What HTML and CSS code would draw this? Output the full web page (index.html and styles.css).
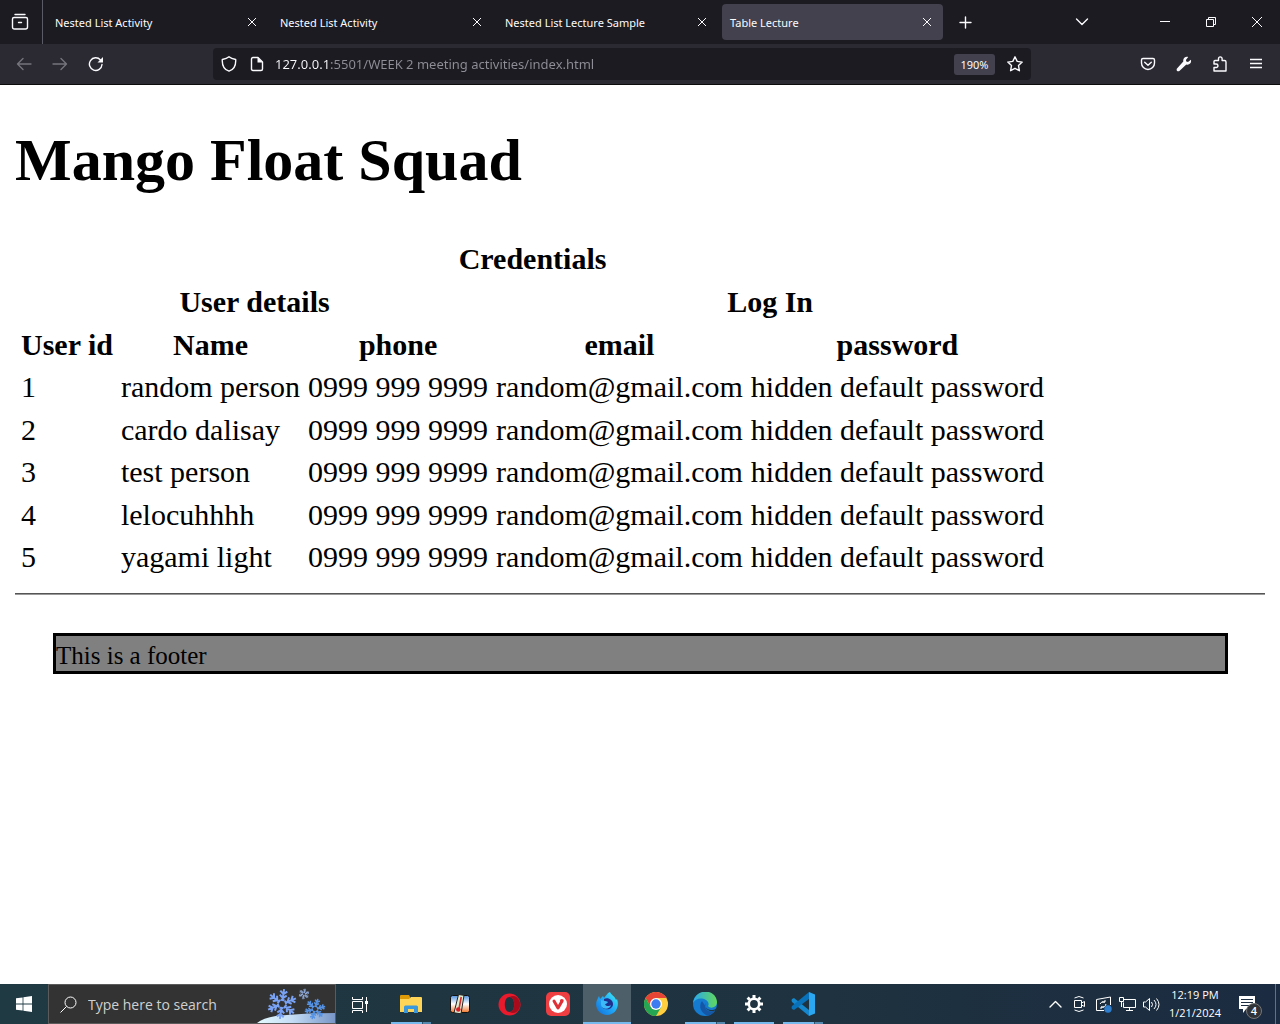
FILE: index.html
```html
<!DOCTYPE html>
<html lang="en">
<head>
<meta charset="utf-8">
<title>Table Lecture</title>
<link rel="stylesheet" href="styles.css">
</head>
<body>
<header class="browser">
  <div class="tabbar">
    <button class="view" aria-label="Firefox View"><svg width="18" height="18" viewBox="0 0 18 18" class="line"><path d="M4 1.500h10M3 4.500h12q1.500 0 1.500 1.500v8q0 2-2 2h-11q-2 0-2-2V6q0-1.500 1.500-1.500z"/><path d="M7.500 9.500h3"/></svg></button>
    <div class="tabs">
      <div class="tab"><button class="tab-name">Nested List Activity</button><button class="close" aria-label="Close tab"><svg width="10" height="10" viewBox="0 0 10 10" class="thin"><path d="M1 1l8 8M9 1l-8 8"/></svg></button></div>
      <div class="tab"><button class="tab-name">Nested List Activity</button><button class="close" aria-label="Close tab"><svg width="10" height="10" viewBox="0 0 10 10" class="thin"><path d="M1 1l8 8M9 1l-8 8"/></svg></button></div>
      <div class="tab"><button class="tab-name">Nested List Lecture Sample</button><button class="close" aria-label="Close tab"><svg width="10" height="10" viewBox="0 0 10 10" class="thin"><path d="M1 1l8 8M9 1l-8 8"/></svg></button></div>
      <div class="tab active"><button class="tab-name">Table Lecture</button><button class="close" aria-label="Close tab"><svg width="10" height="10" viewBox="0 0 10 10" class="thin"><path d="M1 1l8 8M9 1l-8 8"/></svg></button></div>
    </div>
    <button class="newtab" aria-label="New tab"><svg width="13" height="13" viewBox="0 0 13 13" class="line"><path d="M6.500 1v11M1 6.500h11"/></svg></button>
    <button class="listtabs" aria-label="List all tabs"><svg width="14" height="8" viewBox="0 0 14 8" class="line"><path d="M1.500 1L7 6.500 12.500 1"/></svg></button>
    <div class="window">
      <button aria-label="Minimize"><svg width="10" height="10" viewBox="0 0 10 10" class="thin"><path d="M0 4.500h10"/></svg></button>
      <button aria-label="Restore"><svg width="10" height="10" viewBox="0 0 10 10" class="thin"><path d="M.5 2.500h7v7h-7zM2.500 2.500v-2h7v7h-2"/></svg></button>
      <button aria-label="Close"><svg width="10" height="10" viewBox="0 0 10 10" class="thin"><path d="M0 0l10 10M10 0L0 10"/></svg></button>
    </div>
  </div>
  <div class="toolbar">
    <div class="nav">
      <button class="dim" aria-label="Back"><svg width="16" height="14" viewBox="0 0 16 14" class="line"><path d="M15 7H1.500M7 1.500L1.500 7 7 12.500"/></svg></button>
      <button class="dim" aria-label="Forward"><svg width="16" height="14" viewBox="0 0 16 14" class="line"><path d="M1 7h13.500M9 1.500L14.500 7 9 12.500"/></svg></button>
      <button aria-label="Reload"><svg width="16" height="16" viewBox="0 0 16 16" class="line"><path d="M14 8.500A6.300 6.300 0 1 1 12.500 4"/><path d="M15 1v5.500H9.500z" fill="currentColor" stroke="none"/></svg></button>
    </div>
    <div class="urlbar">
      <button aria-label="Tracking protection"><svg width="16" height="16" viewBox="0 0 16 16" class="line"><path d="M8 .8C6 2.500 4 3 1.300 3.500 1 9 2.500 13.500 8 15.200c5.500-1.700 7-6.200 6.700-11.700C12 3 10 2.500 8 .8z"/></svg></button>
      <button aria-label="Site information"><svg width="14" height="16" viewBox="0 0 14 16" class="line"><path d="M3 1.500h5L12.500 6v7q0 1.500-1.500 1.500H3q-1.500 0-1.500-1.500V3q0-1.500 1.500-1.500z"/><path d="M7.500 1v5.500H13z" fill="currentColor" stroke="none"/></svg></button>
      <input class="address" type="text" aria-label="Address" value="127.0.0.1:5501/WEEK 2 meeting activities/index.html">
      <button class="zoom">190%</button>
      <button class="star" aria-label="Bookmark this page"><svg width="18" height="18" viewBox="0 0 18 18" class="line"><path d="M9 1.800l2.200 4.600 5 .7-3.700 3.500.9 5.100L9 13.300l-4.400 2.400.9-5.100L1.800 7.100l5-.7z"/></svg></button>
    </div>
    <div class="extras">
      <button aria-label="Save to Pocket"><svg width="16" height="16" viewBox="0 0 16 16" class="line"><path d="M3 2.500h10q1.500 0 1.500 1.500v3a6.500 6.500 0 0 1-13 0V4q0-1.500 1.500-1.500z"/><path d="M4.700 6.200L8 9.300l3.300-3.100"/></svg></button>
      <button aria-label="Developer tools"><svg width="16" height="16" viewBox="0 0 16 16"><path fill="currentColor" d="M14.900 3.700l-2.900 2.300-1.700-.4-.4-1.700 2.300-2.900C9.400.2 6.700 2.300 7.300 5.400L1 12.600c-1.200 1.600.8 3.600 2.400 2.300l6.900-6.400c3.300.9 5.500-1.800 4.600-4.800z"/></svg></button>
      <button aria-label="Extensions"><svg width="16" height="18" viewBox="0 0 16 18" class="line"><path d="M2 9V6.500q0-1 1-1h3.500V3.700a1.800 1.800 0 0 1 3.600 0v1.800h2.400q1.500 0 1.500 1.500v9H2v-3.500h2.200a1.750 1.750 0 0 0 0-3.500z"/></svg></button>
      <button aria-label="Menu"><svg width="12" height="12" viewBox="0 0 12 12" class="line"><path d="M0 1.500h12M0 5.500h12M0 9.500h12"/></svg></button>
    </div>
  </div>
</header>

<main class="page">
  <h1>Mango Float Squad</h1>
  <table class="people">
    <thead>
      <tr><th colspan="5">Credentials</th></tr>
      <tr><th colspan="3">User details</th><th colspan="2">Log In</th></tr>
      <tr><th>User id</th><th>Name</th><th>phone</th><th>email</th><th>password</th></tr>
    </thead>
    <tbody>
      <tr><td>1</td><td>random person</td><td>0999 999 9999</td><td>random@gmail.com</td><td>hidden default password</td></tr>
      <tr><td>2</td><td>cardo dalisay</td><td>0999 999 9999</td><td>random@gmail.com</td><td>hidden default password</td></tr>
      <tr><td>3</td><td>test person</td><td>0999 999 9999</td><td>random@gmail.com</td><td>hidden default password</td></tr>
      <tr><td>4</td><td>lelocuhhhh</td><td>0999 999 9999</td><td>random@gmail.com</td><td>hidden default password</td></tr>
      <tr><td>5</td><td>yagami light</td><td>0999 999 9999</td><td>random@gmail.com</td><td>hidden default password</td></tr>
    </tbody>
  </table>
  <hr>
  <footer>This is a footer</footer>
</main>

<div class="taskbar">
  <button class="start" aria-label="Start"><svg width="16" height="16" viewBox="0 0 16 16" fill="#fff"><path d="M0 2.300l6.600-.9v6.200H0zM7.400 1.200L16 0v7.600H7.400zM0 8.400h6.600v6.200L0 13.700zM7.400 8.400H16V16l-8.600-1.200z"/></svg></button>
  <div class="search">
    <svg width="17" height="17" viewBox="0 0 17 17" class="thin"><circle cx="10.500" cy="6.500" r="5.500"/><path d="M6.500 10.500L.5 16.500"/></svg>
    <input type="text" aria-label="Search" placeholder="Type here to search">
    <svg class="snow" width="78" height="38" viewBox="0 0 78 38">
      <defs>
        <linearGradient id="hill" x2="1" y2="0"><stop offset="0" stop-color="#e4fbff"/><stop offset=".45" stop-color="#c4dcf5"/><stop offset="1" stop-color="#7896c8"/></linearGradient>
        <g id="arm"><path d="M0-3v-12M0-6l-3.500-3M0-6l3.500-3M0-10l-3.500-3M0-10l3.500-3M-2-4L2-4"/></g>
        <g id="flake" fill="none"><use href="#arm"/><use href="#arm" transform="rotate(60)"/><use href="#arm" transform="rotate(120)"/><use href="#arm" transform="rotate(180)"/><use href="#arm" transform="rotate(240)"/><use href="#arm" transform="rotate(300)"/></g>
      </defs>
      <path fill="url(#hill)" d="M0 38Q8 31 30 30 50 28 78 28v10z"/>
      <use href="#flake" transform="translate(25 19) rotate(8)" stroke="#79a2f4" stroke-width="2"/>
      <use href="#flake" transform="translate(47 9) rotate(10) scale(.36)" stroke="#8ea9d8" stroke-width="2.400"/>
      <use href="#flake" transform="translate(58 24) rotate(16) scale(.7)" stroke="#5592e4" stroke-width="2.200"/>
    </svg>
  </div>
  <button class="taskview" aria-label="Task View"><svg width="17" height="17" viewBox="0 0 17 17" class="thin"><path d="M.5 1v2.500h10V1M.5 5.500h10v7H.5zM.5 17v-2.500h10V17M14.500 1v15"/><path d="M13 5h3v3h-3z" fill="#fff" stroke="none"/></svg></button>
  <div class="apps">
    <button class="open more" aria-label="File Explorer"><svg width="22" height="18" viewBox="0 0 22 18"><path fill="#df9a08" d="M0 1q0-1 1-1h8l1 2v4H0z"/><path fill="#ffd457" d="M0 4h9l2-2h10q1 0 1 1v14H0z"/><path fill="#3b98dd" d="M4 18v-6q0-1.500 1.500-1.500h11q1.500 0 1.500 1.500v6h-4v-4H8v4z"/></svg></button>
    <button aria-label="Temperature monitor"><svg width="22" height="22" viewBox="0 0 22 22"><defs><linearGradient id="heat" y2="1" x2="0"><stop offset="0" stop-color="#5493df"/><stop offset=".5" stop-color="#fff"/><stop offset="1" stop-color="#ef762c"/></linearGradient></defs><rect x="1.500" y="2.500" width="19" height="17" rx="2" fill="url(#heat)" stroke="#111"/><path d="M9.500 1.500l5.500.8-3 18.500-7-1z" fill="#ddeccf" stroke="#222"/><path d="M12.200 4L10 16" stroke="#d42b2b" stroke-width="1.600"/><circle cx="9.300" cy="16.500" r="2.300" fill="#d91d25"/></svg></button>
    <button aria-label="Opera"><svg width="23" height="23" viewBox="0 0 23 23"><path fill="#e81a2c" fill-rule="evenodd" d="M11.500.5a11 11 0 1 0 0 22 11 11 0 0 0 0-22zm0 3.500c3 0 4.700 3.500 4.700 7.500S14.500 19 11.500 19s-4.700-3.500-4.700-7.500S8.500 4 11.500 4z"/><path fill="#a80c1c" d="M11.500 4c6.300 0 6.300 15 0 15 2.500 1.500 5 1 7 0 5-4 5-11 0-15-2-1.500-5-1.500-7 0z"/></svg></button>
    <button aria-label="Vivaldi"><svg width="24" height="24" viewBox="0 0 24 24"><rect width="24" height="24" rx="5" fill="#ef3e42"/><circle cx="12" cy="12" r="9" fill="#fff"/><path d="M8 9l4 7 3.500-6" fill="none" stroke="#df3037" stroke-width="3" stroke-linecap="round" stroke-linejoin="round"/><circle cx="15.800" cy="8.800" r="1.900" fill="#df3037"/></svg></button>
    <button class="open current" aria-label="Firefox Developer Edition"><svg width="24" height="24" viewBox="0 0 24 24"><defs><linearGradient id="fox" x1="1" y1="0" x2="0" y2="1"><stop offset="0" stop-color="#42f2f5"/><stop offset=".5" stop-color="#20a8f7"/><stop offset="1" stop-color="#126bd7"/></linearGradient></defs><path fill="url(#fox)" d="M15 0c1 3 5 4 6 8l1-1c3 8-2 16-10 16C4 23-1 15 2 8l2-4 1 3 3-3 1 2c2-2 3-5 6-6z"/><path fill="#20318d" d="M9 7c4-2 9 1 9 5 0 4-4 6-8 5-2-.5-3-2-3.500-3.500L11 12l2-2-4-1z"/><path fill="#3cb9f6" d="M6 8l4 1 3 1-3 2c0 2 4 3 6 1-1 5-9 5-10 0z"/></svg></button>
    <button aria-label="Chrome"><svg width="24" height="24" viewBox="0 0 24 24"><circle cx="12" cy="12" r="12" fill="#ffcd40"/><path fill="#e84435" d="M1.600 6A12 12 0 0 1 22.400 6H12L6.800 15z"/><path fill="#24a653" d="M1.600 6A12 12 0 0 0 12 24l5.200-9H6.800z"/><circle cx="12" cy="12" r="6" fill="#fff"/><circle cx="12" cy="12" r="4.700" fill="#3c7cf0"/></svg></button>
    <button class="open more" aria-label="Edge"><svg width="24" height="24" viewBox="0 0 24 24"><defs><linearGradient id="sea"><stop offset="0" stop-color="#2ba8ed"/><stop offset="1" stop-color="#61d85b"/></linearGradient></defs><circle cx="12" cy="12" r="12" fill="#147bd1"/><path fill="#1557a7" d="M9 9c-4 5-1 13 6 14.500 3-.5 6-3 7-5-5 2-10 0-10-5z"/><path fill="url(#sea)" d="M0 11C2-4 23-4 24 10c0 6-7 7-9 4 1-1 1-4-2-6C8 5 2 7 0 11z"/><path fill="#203743" d="M12.500 11c-1.500 3 1 7 5.500 7 2 0 4-.5 5-1.500l2 .5v4l-3-2.500c-6 2-11-2-9.500-7.500z"/></svg></button>
    <button class="open" aria-label="Settings"><svg width="18" height="18" viewBox="0 0 18 18" fill="none" stroke="#fff"><circle cx="9" cy="9" r="5.200" stroke-width="2.600"/><path stroke-width="3" d="M9 0v3M9 15v3M0 9h3M15 9h3M2.600 2.600l2.200 2.200M13.200 13.200l2.200 2.200M15.400 2.600l-2.200 2.200M4.800 13.200l-2.200 2.200"/></svg></button>
    <button class="open more" aria-label="Visual Studio Code"><svg width="24" height="24" viewBox="0 0 24 24"><path fill="#1487ce" d="M1 7l2-1 15 12v6L1 10q-1-2 0-3z"/><path fill="#0871b9" d="M1 17l2 1L18 7V0L1 14q-1 2 0 3z"/><path fill="#2aa7f0" d="M18 0l6 2.500v19L18 24z"/></svg></button>
  </div>
  <div class="tray">
    <button aria-label="Show hidden icons"><svg width="13" height="8" viewBox="0 0 13 8" class="line"><path d="M1 7l5.500-5.500L12 7"/></svg></button>
    <button aria-label="Camera"><svg width="12" height="18" viewBox="0 0 12 18" class="thin"><path d="M1.500 3q4.500-3 9 0M1.500 15q4.500 3 9 0M1.500 5.500h7v7h-7zM8.500 8l3-1.500v5L8.500 10"/></svg></button>
    <button aria-label="Windows Update"><svg width="17" height="17" viewBox="0 0 17 17" class="thin"><path d="M9 14.500H1.500v-11L15.500 1v8M5 8q1-3 5-2V4M10 6H7M11 8q-1 4-5 3v2M6 11h3"/><circle cx="13" cy="13" r="3.700" fill="#2f7dcd" stroke="none"/></svg></button>
    <button aria-label="Network"><svg width="17" height="15" viewBox="0 0 17 15" class="thin"><path d="M4 2.500h12.500v8H4.500v-5M10.500 10.500v3M7 13.500h7M.5.500h4v4h-4zM2.500 5v5"/></svg></button>
    <button aria-label="Volume"><svg width="17" height="15" viewBox="0 0 17 15" class="thin"><path d="M.5 5v5h2l4 3.500v-12L2.500 5zM8.500 5q2 2.500 0 5M11 3q4 4.500 0 9M13.500 1.500q5 6 0 12"/></svg></button>
    <button class="clock"><span>12:19 PM</span><span>1/21/2024</span></button>
    <button class="notes" aria-label="Notifications"><svg width="16" height="17" viewBox="0 0 16 17"><path fill="#fff" d="M0 0h16v13H7l-3 4v-4H0z"/><path stroke="#1d2d42" d="M2 3.500h12M2 6.500h12M2 9.500h8"/></svg><span class="count">4</span></button>
    <button class="desktop" aria-label="Show desktop"></button>
  </div>
</div>
</body>
</html>
```
FILE: styles.css
```css
* { box-sizing: border-box; }
body {
  margin: 0;
  min-height: 100vh;
  display: flex;
  flex-direction: column;
  background: #fff;
  font-family: "Open Sans", "Noto Sans", sans-serif;
}
button, input { font: inherit; color: inherit; border: 0; background: none; padding: 0; margin: 0; outline: 0; }
button { display: flex; align-items: center; justify-content: center; }
svg { display: block; flex: none; }
.line, .thin { fill: none; stroke: currentColor; }
.line { stroke-width: 1.4; stroke-linecap: round; stroke-linejoin: round; }
.thin { stroke-width: 1; }

/* Browser chrome */
.browser { color: #fbfbfe; border-bottom: 1px solid #0c0c0d; font-family: "Noto Sans", sans-serif; }
.tabbar { display: flex; align-items: center; height: 44px; background: #1c1b22; font-size: 11px; }
.view { width: 43px; height: 44px; padding-right: 2px; border-right: 1px solid #5b5b66; }
.tabs { display: flex; gap: 4px; padding-left: 4px; }
.tab { display: flex; align-items: center; width: 221px; height: 36px; padding: 0 6px 0 8px; border-radius: 4px; }
.tab.active { background: #42414d; }
.tab-name { flex: 1; justify-content: flex-start; }
.close { width: 20px; height: 20px; }
.newtab { width: 36px; height: 36px; margin-left: 4px; }
.listtabs { width: 36px; height: 36px; margin-left: auto; margin-right: 42px; }
.window { display: flex; }
.window button { width: 46px; height: 44px; }
.toolbar { display: flex; align-items: center; height: 40px; padding: 0 6px; background: #2b2a33; }
.nav, .extras { display: flex; }
.nav button, .extras button { width: 36px; height: 36px; }
.nav { flex: 0 0 207px; }
.extras { flex: 0 0 243px; justify-content: flex-end; }
.dim { color: #75747c; }
.urlbar { display: flex; flex: 1; align-items: center; height: 32px; padding-left: 2px; background: #1c1b22; border-radius: 4px; font-size: 13px; }
.urlbar button { width: 28px; height: 28px; }
.address {
  flex: 1;
  min-width: 0;
  margin-left: 4px;
  color: transparent;
  caret-color: #fbfbfe;
  background: linear-gradient(to right, #fbfbfe 56px, #8f8e97 56px);
  -webkit-background-clip: text;
  background-clip: text;
}
.urlbar .zoom { width: 41px; height: 21px; background: #42414d; border-radius: 3px; font-size: 11px; }
.urlbar .star { width: 32px; margin-left: 4px; }

/* Document */
.page { flex: 1; padding: 0 15px; color: #000; font: 30px/34px "Liberation Serif", serif; }
h1 { margin: 41px 0; font-size: 60px; line-height: 68px; }
.people { border-spacing: 4px; }
.people th, .people td { height: 39px; padding: 0 2px; }
.people tbody tr:nth-child(odd) td { height: 38px; }
hr { height: 2px; margin: 13px 0 38px; border: 0; border-top: 1px solid #555; background: #999; }
footer { margin: 0 37px 0 38px; padding: 5px 0 1px; border: 3px solid #000; background: #808080; font-size: 25px; line-height: 29px; }

/* Taskbar */
.taskbar { display: flex; height: 40px; background: linear-gradient(to right, #203a43, #1e323f 65%, #1b2b41); color: #fff; }
.taskbar button { height: 40px; }
.start, .taskview { width: 48px; }
.search { display: flex; align-items: center; width: 288px; padding-left: 11px; border: 1px solid #5b5b5b; background: #333; }
.search input { flex: 1; min-width: 0; margin-left: 11px; font-size: 14px; }
.search input::placeholder { color: #d0d0d0; opacity: 1; }
.apps { display: flex; gap: 1px; margin-left: 3px; }
.apps button { position: relative; width: 48px; }
.apps .current { background: #4d6069; }
.apps .open::after { content: ""; position: absolute; left: 4px; right: 4px; bottom: 0; height: 2px; background: #76b9ed; }
.apps .more::after { background: linear-gradient(to right, #76b9ed 31px, #2c536d 31px, #2c536d 32px, #5588ae 32px); }
.apps .current::after { left: 0; right: 0; }
.tray { display: flex; margin-left: auto; }
.tray button { width: 24px; }
.tray .clock { flex-direction: column; width: 64px; font-size: 11px; line-height: 18px; }
.tray .notes { position: relative; width: 48px; padding-right: 9px; }
.count { position: absolute; left: 19px; top: 19px; width: 16px; height: 16px; border: 1px solid #777; border-radius: 50%; background: #303338; font-size: 11px; line-height: 14px; font-weight: 600; }
.tray .desktop { width: 5px; border-left: 1px solid #66717e; }
```
